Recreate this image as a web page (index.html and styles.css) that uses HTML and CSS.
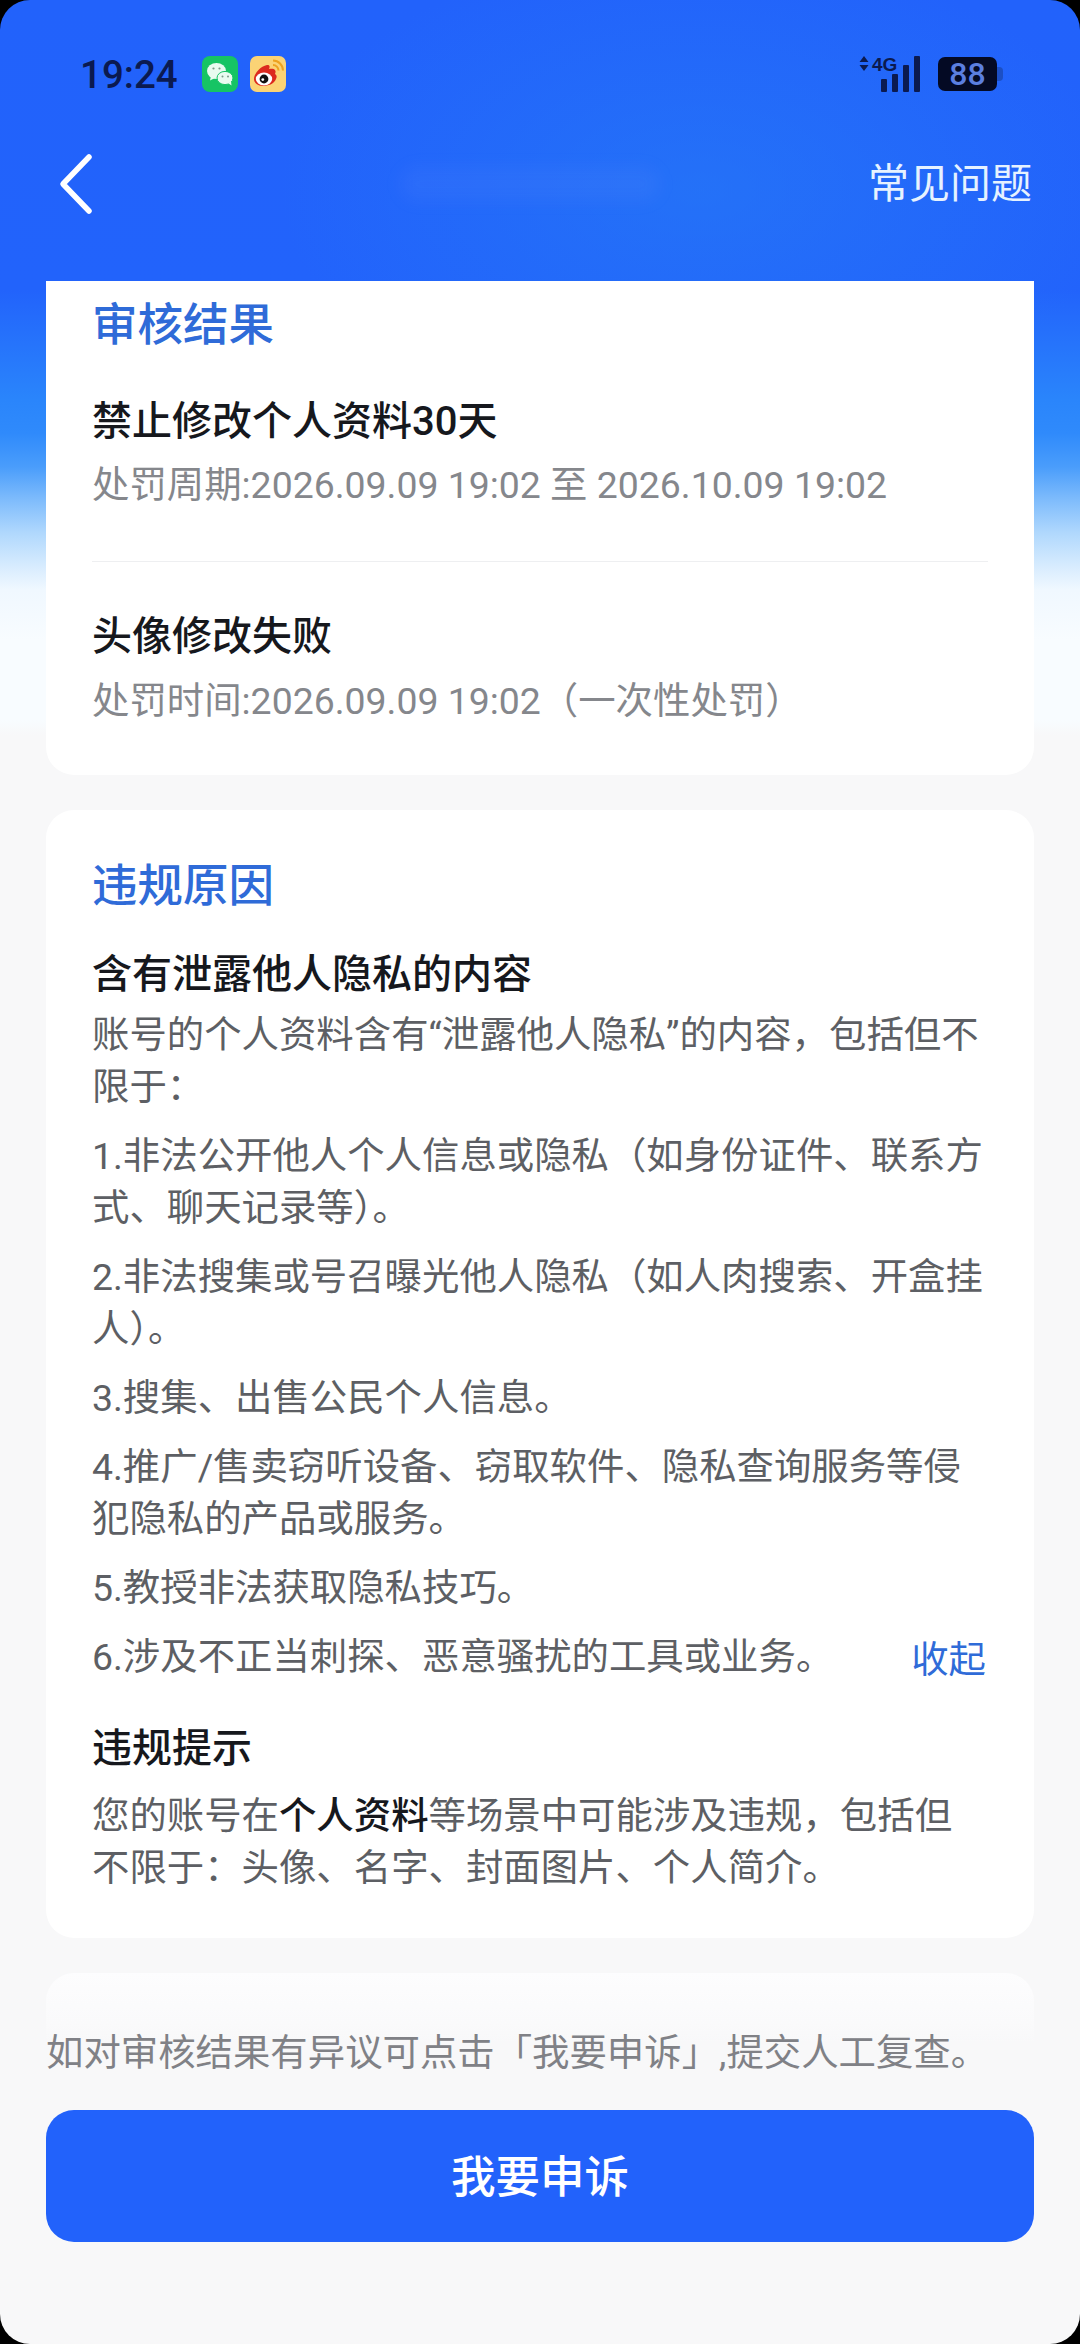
FILE: index.html
```html
<!DOCTYPE html>
<html lang="zh-CN">
<head>
    <meta charset="UTF-8">
    <meta name="viewport" content="width=device-width, initial-scale=1.0">
    <title>审核结果</title>
    <link rel="stylesheet" href="styles.css">
</head>
<body>
    <div class="page">
        <div class="status-bar">
            <div class="status-left">
                <span class="clock">19:24</span>
                <svg class="app-icon" viewBox="0 0 36 36">
                    <rect width="36" height="36" rx="8" fill="#16c464"/>
                    <ellipse cx="14.5" cy="15" rx="9.5" ry="8" fill="#e9fbf0"/>
                    <path d="M9 20l-1 4.500 5-2.500z" fill="#e9fbf0"/>
                    <ellipse cx="23" cy="22" rx="8" ry="6.600" fill="#e9fbf0" stroke="#16c464" stroke-width="1"/>
                    <path d="M26 27l3.500 2.500-.5-4z" fill="#e9fbf0"/>
                    <circle cx="11.500" cy="12.500" r="1.100" fill="#7a9a88"/>
                    <circle cx="17.500" cy="12.500" r="1.100" fill="#7a9a88"/>
                    <circle cx="20.500" cy="20.500" r="1" fill="#7a9a88"/>
                    <circle cx="26" cy="20.500" r="1" fill="#7a9a88"/>
                </svg>
                <svg class="app-icon" viewBox="0 0 36 36">
                    <rect width="36" height="36" rx="7" fill="#fbd375"/>
                    <path d="M4 23c0-6 7-13 13-14 3-.5 3 2 2 4 5-1 8 1 6 5 2 1 2 3 1 5-2 5-8 7-13 7-5 0-9-3-9-7z" fill="#dc2a1e"/>
                    <ellipse cx="14" cy="23" rx="8.200" ry="6.400" fill="#fff"/>
                    <circle cx="14" cy="23" r="4.400" fill="#111"/>
                    <circle cx="12.800" cy="23.600" r="1.400" fill="#fff"/>
                    <path d="M23 9c3 0 5.500 2.500 5.500 5.500M23 4.500c5.500 0 10 4.500 10 10" fill="none" stroke="#eda21f" stroke-width="2"/>
                </svg>
            </div>
            <div class="status-right">
                <div class="net">
                    <svg class="updown" viewBox="0 0 10 15">
                        <path d="M5 0l4.500 6h-9zM5 15L.5 9h9z" fill="#0b1a50"/>
                    </svg>
                    <span class="net-label">4G</span>
                    <div class="signal">
                        <i class="s1"></i><i class="s2"></i><i class="s3"></i><i class="s4"></i>
                    </div>
                </div>
                <div class="battery"><span>88</span></div>
            </div>
        </div>

        <div class="nav-bar">
            <svg class="back" viewBox="0 0 36 62">
                <path d="M31 4L5 31l26 27" fill="none" stroke="#fff" stroke-width="5.500" stroke-linecap="round" stroke-linejoin="round"/>
            </svg>
            <div class="nav-title"></div>
            <span class="nav-link">常见问题</span>
        </div>

        <div class="content">
            <div class="card card-top">
                <h2>审核结果</h2>
                <div class="result">
                    <h3>禁止修改个人资料30天</h3>
                    <p class="meta">处罚周期:2026.09.09 19:02 至 2026.10.09 19:02</p>
                </div>
                <div class="divider"></div>
                <div class="result">
                    <h3>头像修改失败</h3>
                    <p class="meta">处罚时间:2026.09.09 19:02（一次性处罚）</p>
                </div>
            </div>

            <div class="card card-reason">
                <h2>违规原因</h2>
                <h3 class="reason-title">含有泄露他人隐私的内容</h3>
                <p class="body-text">账号的个人资料含有“泄露他人隐私”的内容，包括但不限于：</p>
                <p class="body-text">1.非法公开他人个人信息或隐私（如身份证件、联系方式、聊天记录等）。</p>
                <p class="body-text">2.非法搜集或号召曝光他人隐私（如人肉搜索、开盒挂人）。</p>
                <p class="body-text">3.搜集、出售公民个人信息。</p>
                <p class="body-text">4.推广/售卖窃听设备、窃取软件、隐私查询服务等侵犯隐私的产品或服务。</p>
                <p class="body-text">5.教授非法获取隐私技巧。</p>
                <div class="last-row">
                    <p class="body-text">6.涉及不正当刺探、恶意骚扰的工具或业务。</p>
                    <span class="collapse">收起</span>
                </div>
                <h3 class="tip-title">违规提示</h3>
                <p class="body-text">您的账号在<b>个人资料</b>等场景中可能涉及违规，包括但不限于：头像、名字、封面图片、个人简介。</p>
            </div>

            <div class="card card-faded"></div>
        </div>

        <div class="footer">
            <p class="hint">如对审核结果有异议可点击「我要申诉」,提交人工复查。</p>
            <button class="appeal">我要申诉</button>
        </div>
    </div>
</body>
</html>
```

FILE: styles.css
```css
* {
    box-sizing: border-box;
}

body {
    margin: 0;
    font-family: Roboto, "Noto Sans CJK SC", sans-serif;
    background-color: #000;
}

h2, h3, p {
    margin: 0;
    font-weight: normal;
}

.page {
    position: relative;
    width: 1080px;
    height: 2344px;
    overflow: hidden;
    border-radius: 30px;
    background:
        radial-gradient(ellipse 420px 240px at 700px 190px, rgba(38, 125, 245, 0.55), rgba(38, 125, 245, 0)),
        linear-gradient(180deg, #2262fb 0, #2263fb 290px, #2a85fb 400px, #2f8afb 433px, #4a9dfb 467px, #7fbcfc 500px, #b0d8fd 533px, #d8ecfe 567px, #f0f8ff 590px, #f8fcff 640px, #f8fcff 720px, #f8f8f9 735px, #f8f8f9 100%);
}

/* status bar */
.status-bar {
    display: flex;
    justify-content: space-between;
    align-items: center;
    height: 36px;
    margin-top: 56px;
    padding: 0 83px 0 80px;
}

.status-left {
    display: flex;
    align-items: center;
}

.clock {
    font-size: 38.500px;
    font-weight: 500;
    color: #0b1a50;
    margin-right: 24px;
}

.app-icon {
    width: 36px;
    height: 36px;
    margin-right: 12px;
}

.status-right {
    display: flex;
    align-items: center;
}

.net {
    display: flex;
    align-items: flex-start;
    width: 61px;
    height: 36px;
    position: relative;
    margin-right: 18px;
}

.updown {
    width: 10px;
    height: 15px;
}

.net-label {
    font-family: "Liberation Sans", sans-serif;
    font-size: 19px;
    line-height: 17px;
    font-weight: bold;
    color: #0b1a50;
    margin-left: 3px;
}

.signal {
    position: absolute;
    right: 0;
    bottom: 0;
    display: flex;
    align-items: flex-end;
    gap: 5px;
    height: 36px;
}

.signal i {
    display: block;
    width: 6px;
    background-color: #0b1a50;
    border-radius: 1px;
}

.signal .s1 { height: 13px; }
.signal .s2 { height: 18px; }
.signal .s3 { height: 27px; }
.signal .s4 { height: 36px; }

.battery {
    position: relative;
    width: 59px;
    height: 34px;
    background-color: #040a24;
    border-radius: 7px;
    display: flex;
    align-items: center;
    justify-content: center;
}

.battery::after {
    content: "";
    position: absolute;
    right: -6px;
    top: 10px;
    width: 6px;
    height: 14px;
    border-radius: 0 4px 4px 0;
    background-color: #1c4fc4;
}

.battery span {
    font-size: 32px;
    font-weight: 500;
    color: #5b7fe0;
}

/* nav */
.nav-bar {
    display: flex;
    align-items: center;
    height: 64px;
    margin-top: 60px;
    padding: 0 48px 0 58px;
}

.back {
    width: 36px;
    height: 62px;
}

.nav-title {
    width: 260px;
    height: 34px;
    margin-left: 306px;
    border-radius: 17px;
    background-color: rgba(150, 170, 250, 0.07);
    filter: blur(8px);
}

.nav-link {
    margin-left: auto;
    font-size: 41px;
    line-height: 64px;
    color: #e6f2ff;
}

/* cards */
.content {
    display: flex;
    flex-direction: column;
    gap: 35px;
    margin-top: 65px;
    padding: 0 46px;
}

.card {
    background-color: #fff;
    border-radius: 28px;
    padding: 0 46px;
}

.card-top {
    height: 494px;
    border-radius: 0 0 28px 28px;
    padding-top: 15px;
}

h2 {
    font-size: 45.500px;
    line-height: 60px;
    font-weight: 500;
    color: #2f6bd8;
}

h3 {
    font-size: 40px;
    line-height: 54px;
    font-weight: 500;
    color: #16181d;
}

.meta {
    font-size: 37.400px;
    line-height: 52px;
    margin-top: 10px;
    color: #85878c;
    white-space: nowrap;
}

.result {
    padding-top: 39px;
}

.card-top .result + .divider {
    margin-top: 50px;
}

.divider {
    height: 1px;
    background-color: #eeeff1;
    margin-bottom: 48px;
}

.card-top .divider + .result {
    padding-top: 0;
}

.card-top .divider + .result .meta {
    margin-top: 11px;
}

.card-reason {
    height: 1128px;
    padding-top: 47px;
}

.reason-title {
    margin-top: 31px;
}

.body-text {
    font-size: 37.400px;
    line-height: 52px;
    color: #5d5f64;
    margin-top: 17px;
}

.reason-title + .body-text {
    margin-top: 7px;
}

.tip-title + .body-text {
    margin-top: 14px;
}

.body-text b {
    font-weight: 500;
    color: #16181d;
}

.last-row {
    position: relative;
}

.collapse {
    position: absolute;
    right: 2px;
    top: 3px;
    font-size: 37.400px;
    line-height: 52px;
    color: #2f6bd8;
}

.tip-title {
    margin-top: 39px;
}

.card-faded {
    height: 200px;
    background: linear-gradient(180deg, #fdfdfe 0, #fafafb 50px, #f8f8f9 70px);
}

/* bottom */
.footer {
    position: absolute;
    left: 46px;
    right: 46px;
    top: 2028px;
}

.hint {
    font-size: 37.400px;
    line-height: 50px;
    color: #808186;
    white-space: nowrap;
}

.appeal {
    display: block;
    width: 100%;
    height: 132px;
    margin-top: 32px;
    padding-bottom: 6px;
    border: none;
    border-radius: 28px;
    background-color: #2262fb;
    color: #fff;
    font-family: inherit;
    font-size: 44.500px;
    font-weight: 500;
}
```
